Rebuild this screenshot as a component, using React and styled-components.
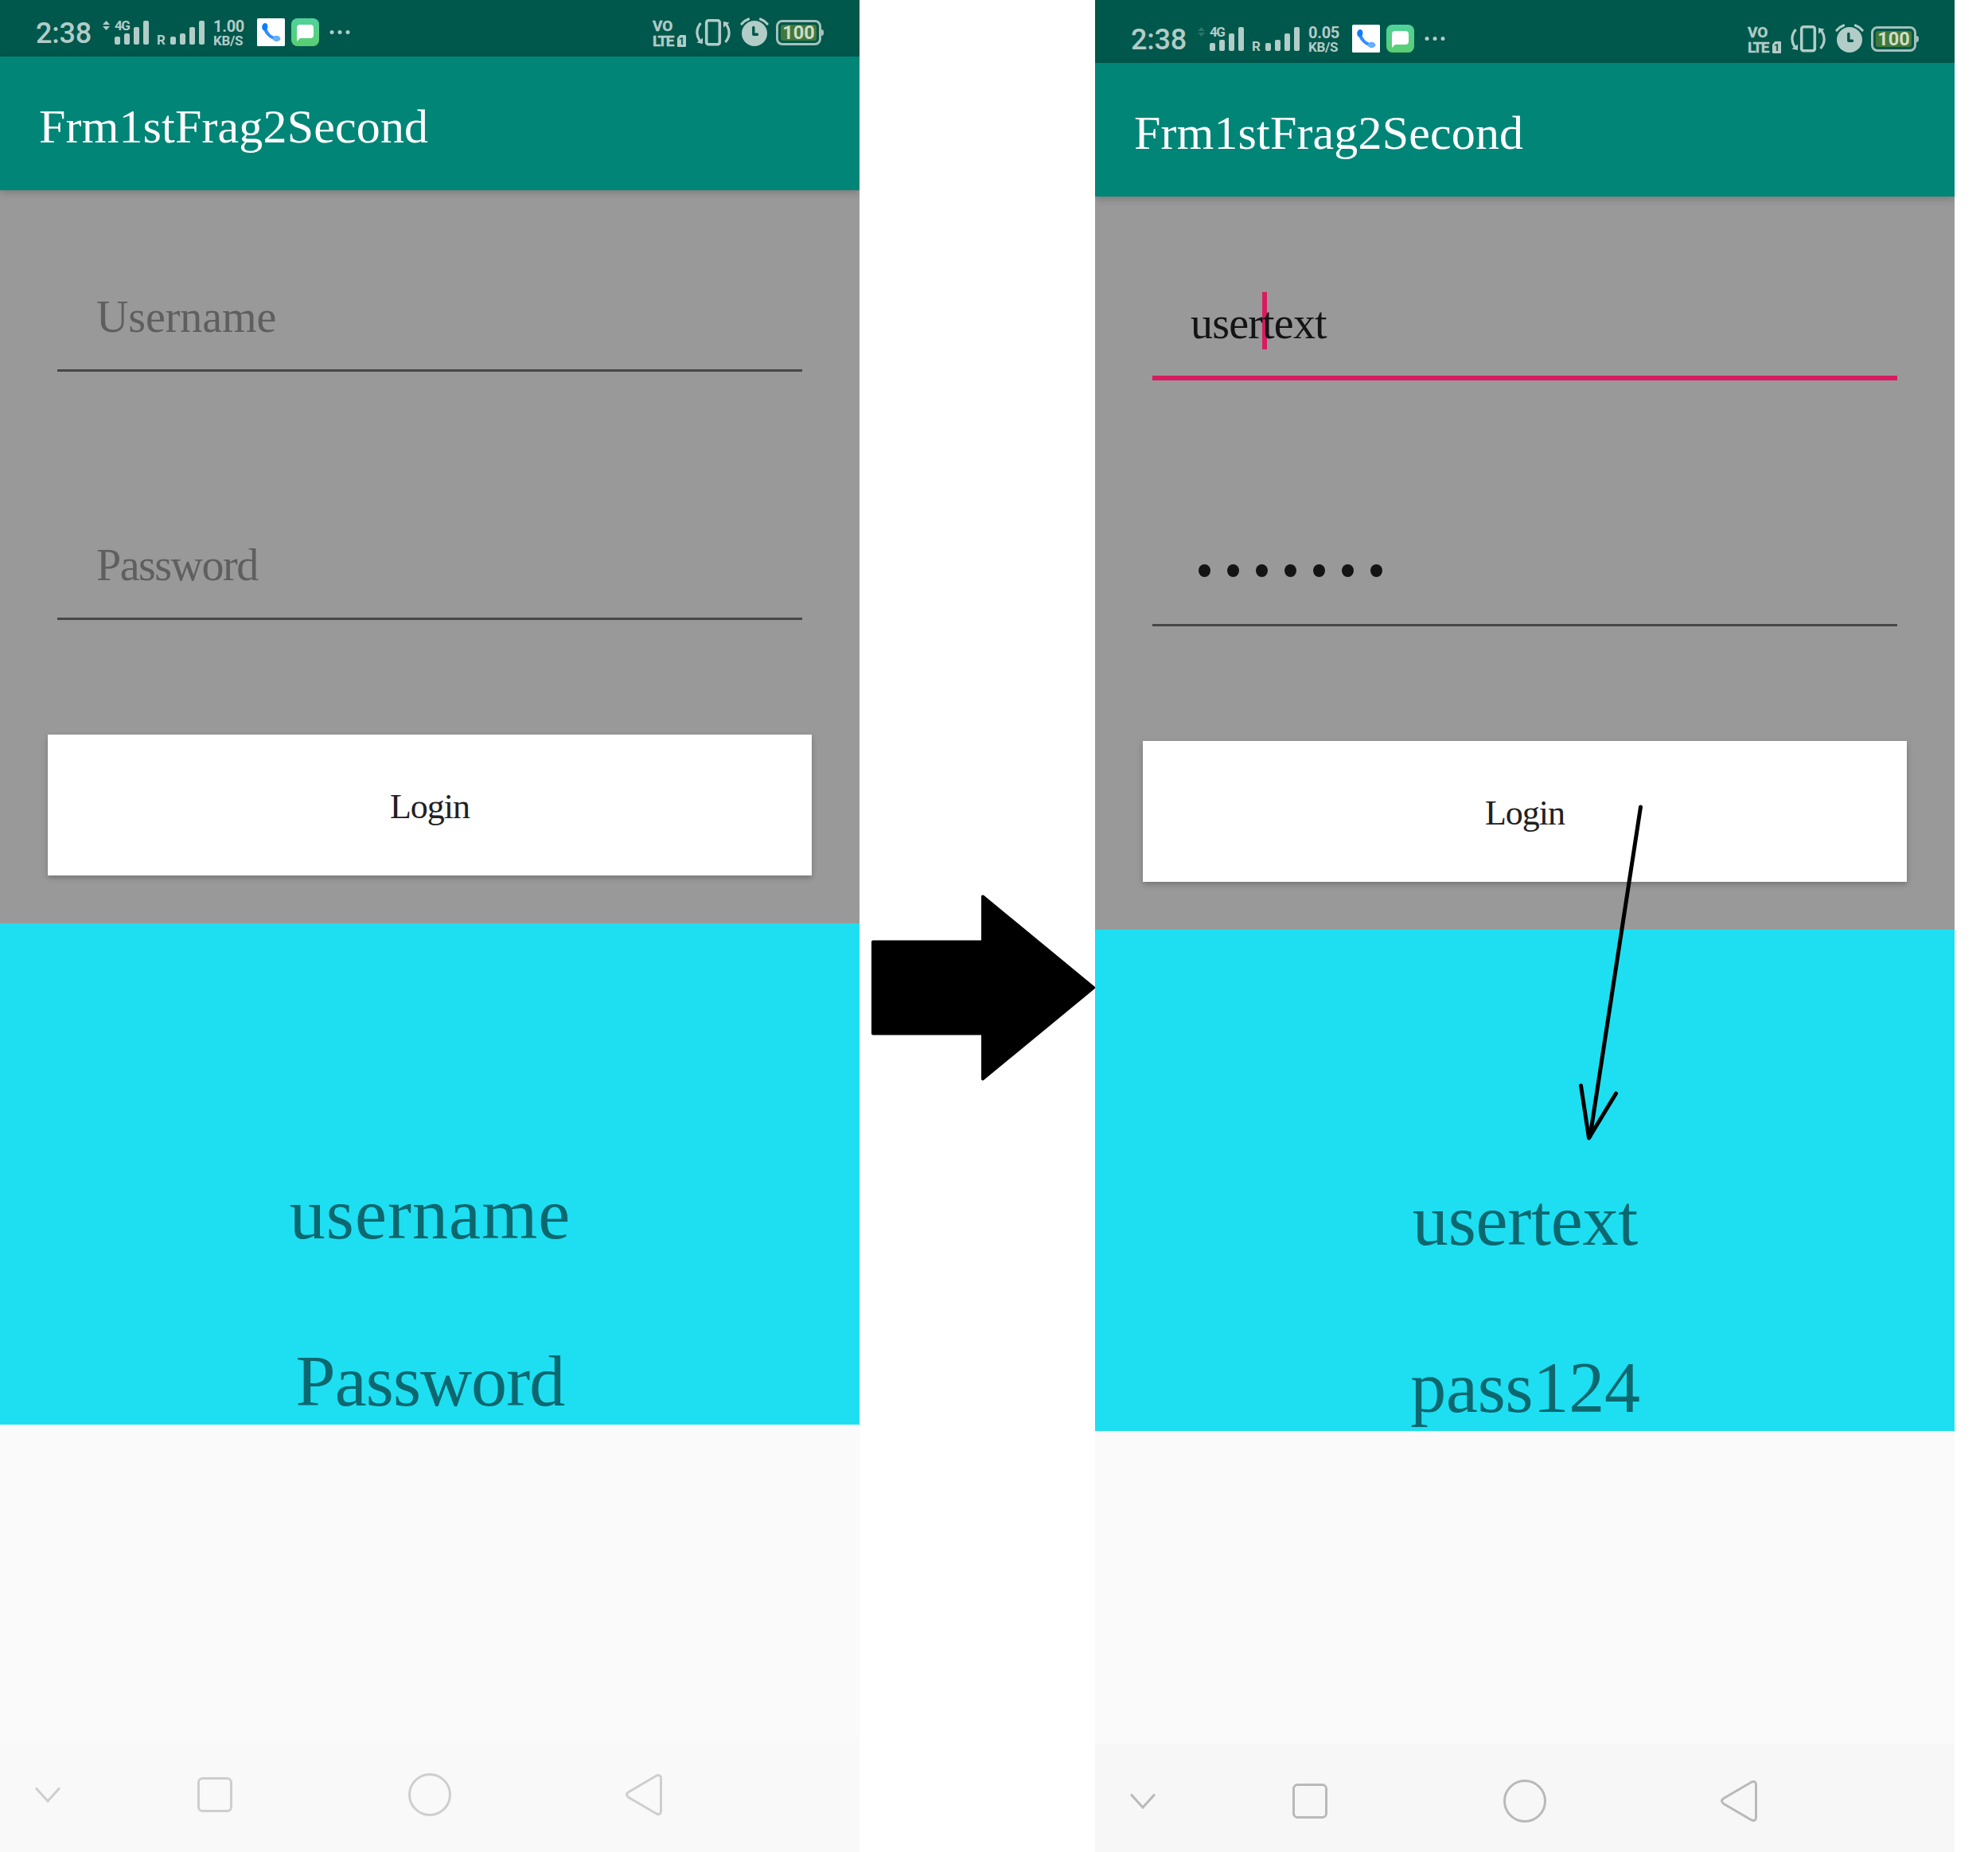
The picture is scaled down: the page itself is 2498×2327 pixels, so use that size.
import React from "react";
import styled, { createGlobalStyle } from "styled-components";

const ICON = "#b2ccc8";
const STATUS_BG = "#00574b";

const GlobalStyle = createGlobalStyle`
  * { box-sizing: border-box; }
  html, body { margin: 0; padding: 0; background: #fff; }
  body { width: 2498px; height: 2327px; overflow: hidden; }
`;

const Board = styled.main`
  position: relative;
  display: grid;
  grid-template-columns: 1080px 296px 1080px;
  width: 2498px;
  height: 2327px;
  background: #fff;
  overflow: hidden;
`;

const Phone = styled.section`
  display: flex;
  flex-direction: column;
  height: 2327px;
  background: #fafafa;
  overflow: hidden;
`;

const StatusBar = styled.header`
  display: flex;
  justify-content: space-between;
  align-items: flex-end;
  flex: none;
  height: ${(p) => p.$height}px;
  padding: 0 45px 13px 45px;
  background: ${STATUS_BG};
  color: ${ICON};
  font-family: Roboto, "Liberation Sans", sans-serif;
  font-weight: 500;
`;

const StatusSide = styled.div`
  display: flex;
  align-items: flex-start;
  height: 36px;
`;

const Clock = styled.span`
  width: 84px;
  font-size: 36px;
  line-height: 36px;
  padding-top: 2px;
  letter-spacing: -0.2px;
`;

const TrafficArrows = styled.svg`
  flex: none;
  width: 9px;
  height: 12px;
  margin-top: 4px;
  opacity: ${(p) => (p.$dim ? 0.25 : 1)};
`;

const Signal = styled.div`
  position: relative;
  display: flex;
  align-items: flex-end;
  gap: 5px;
  height: 34px;
  margin-left: ${(p) => p.$gap}px;
`;

const SignalBar = styled.i`
  width: 7px;
  height: ${(p) => p.$h}px;
  border-radius: 2px;
  background: ${ICON};
`;

const NetworkLabel = styled.span`
  position: absolute;
  left: 0;
  top: 2px;
  font-size: 17px;
  font-weight: 700;
  line-height: 16px;
  letter-spacing: -1.6px;
`;

const Roaming = styled.span`
  width: 10px;
  margin: 20px 0 0 10px;
  font-size: 17px;
  font-weight: 700;
  line-height: 16px;
`;

const Speed = styled.div`
  width: 42px;
  margin: 2px 0 0 11px;
  font-weight: 700;
`;

const SpeedValue = styled.div`
  font-size: 20px;
  line-height: 18px;
  letter-spacing: -0.3px;
`;

const SpeedUnit = styled.div`
  font-size: 17px;
  line-height: 18px;
  letter-spacing: -0.3px;
`;

const AppIcon = styled.svg`
  flex: none;
  width: 35px;
  height: 35px;
  margin: 1px 0 0 ${(p) => p.$gap}px;
`;

const More = styled.svg`
  width: 28px;
  height: 8px;
  margin: 15px 0 0 11px;
`;

const Volte = styled.div`
  width: 43px;
  margin-right: 11px;
  padding-top: 1px;
  font-weight: 700;
  font-size: 19px;
  line-height: 19px;
  -webkit-text-stroke: 0.4px ${ICON};
`;

const VolteRow = styled.div`
  display: flex;
  align-items: flex-start;
  height: 19px;
`;

const Lte = styled.span`
  flex: none;
  width: 28px;
  letter-spacing: -1.6px;
`;

const SimBadge = styled.span`
  flex: none;
  width: 11px;
  height: 15px;
  margin: 2px 0 0 3px;
  border-radius: 1px;
  clip-path: polygon(30% 0, 100% 0, 100% 100%, 0 100%, 0 26%);
  background: ${ICON};
  color: ${STATUS_BG};
  -webkit-text-stroke: 0;
  font-size: 13px;
  line-height: 15px;
  text-align: center;
  letter-spacing: 0;
`;

const StatusIcon = styled.svg`
  flex: none;
  width: ${(p) => p.$w}px;
  height: 36px;
  margin-right: ${(p) => p.$gap}px;
`;

const Battery = styled.div`
  position: relative;
  width: 57px;
  height: 32px;
  margin: 3px 3px 0 0;
  padding: 3px;
  border: 3px solid #a3c1bc;
  border-radius: 8px;
  &::after {
    content: "";
    position: absolute;
    left: 54px;
    top: 9px;
    width: 3px;
    height: 8px;
    border-radius: 0 4px 4px 0;
    background: #a3c1bc;
  }
`;

const BatteryLevel = styled.div`
  height: 20px;
  border-radius: 3px;
  background: #41793a;
  color: #cfddc9;
  font-size: 23.5px;
  line-height: 21px;
  font-weight: 700;
  text-align: center;
`;

const serif = `font-family: "Liberation Serif", "Times New Roman", serif;`;

const AppBar = styled.div`
  position: relative;
  z-index: 1;
  flex: none;
  height: 168px;
  padding: 58px 0 0 49px;
  background: #008577;
  box-shadow: 0 3px 9px rgba(0, 0, 0, 0.2);
  color: #fff;
  ${serif}
  font-size: 60px;
  line-height: 60px;
  letter-spacing: 0.15px;
`;

const Form = styled.div`
  flex: none;
  display: flex;
  flex-direction: column;
  height: 921px;
  padding: 130px 60px 60px;
  background: #999;
`;

const Field = styled.label`
  position: relative;
  display: flex;
  flex-direction: column;
  justify-content: space-between;
  height: 98px;
  margin: 0 12px ${(p) => p.$after}px;
`;

const FieldText = styled.span`
  position: relative;
  height: 56px;
  padding: 1px 0 0 ${(p) => (p.$hint ? 49 : 48)}px;
  color: ${(p) => (p.$hint ? "#5f5f5f" : "#141414")};
  ${serif}
  font-size: 56px;
  line-height: 56px;
  letter-spacing: ${(p) => p.$spacing}px;
`;

const Underline = styled.span`
  height: ${(p) => (p.$focused ? 6 : 3)}px;
  margin-bottom: ${(p) => (p.$focused ? -3 : 0)}px;
  background: ${(p) => (p.$focused ? "#d81b60" : "#474747")};
`;

const Caret = styled.span`
  position: absolute;
  left: 138px;
  top: -10px;
  width: 6px;
  height: 72px;
  background: #d81b60;
`;

const Mask = styled.span`
  display: flex;
  gap: 21px;
  padding: 20px 0 0 58px;
`;

const MaskDot = styled.i`
  width: 15px;
  height: 16px;
  border-radius: 50%;
  background: #141414;
`;

const LoginButton = styled.button`
  height: 177px;
  padding: 69px 0 0;
  border: 0;
  background: #fff;
  box-shadow: 0 3px 7px rgba(0, 0, 0, 0.24);
  color: #212121;
  ${serif}
  font-size: 44px;
  line-height: 44px;
  letter-spacing: -1px;
  display: block;
  text-align: center;
`;

const LoginLabel = styled.span`
  display: block;
  height: 108px;
`;

const Result = styled.div`
  flex: none;
  display: flex;
  flex-direction: column;
  align-items: center;
  gap: 120px;
  height: 630px;
  padding: 321px 0 0 1px;
  background: #1ddff1;
`;

const ResultText = styled.div`
  color: #0d676f;
  ${serif}
  font-size: 90px;
  line-height: 90px;
  letter-spacing: ${(p) => p.$spacing}px;
`;

const Blank = styled.div`
  flex: none;
  height: 393px;
`;

const NavBar = styled.nav`
  flex: none;
  height: 144px;
  background: ${(p) => (p.$strong ? "#f7f7f7" : "#f9f9f9")};
  color: ${(p) => (p.$strong ? "#b9b9b9" : "#cecece")};
`;

const NavIcons = styled.div`
  display: flex;
  align-items: center;
  height: 144px;
  padding-left: 43px;
`;

const NavIcon = styled.svg`
  flex: none;
  width: ${(p) => p.$w}px;
  height: 56px;
  margin-right: ${(p) => p.$gap}px;
  fill: none;
  stroke: currentColor;
  stroke-width: 3;
`;

const Gutter = styled.div`
  padding-top: 1124px;
`;

const BlockArrow = styled.svg`
  display: block;
  width: 281px;
  height: 234px;
  margin-left: 15px;
`;

const Pointer = styled.svg`
  position: absolute;
  left: 1980px;
  top: 1005px;
  width: 90px;
  height: 435px;
  fill: none;
  stroke: #000;
  stroke-width: 5;
  stroke-linecap: round;
  stroke-linejoin: round;
`;

const Bars = () => [10, 14, 22, 30].map((h) => <SignalBar key={h} $h={h} />);

function Status({ height, speed, idle }) {
  return (
    <StatusBar $height={height}>
      <StatusSide>
        <Clock>2:38</Clock>
        <TrafficArrows viewBox="0 0 9 12" $dim={idle}>
          <path d="M4.5 0L9 5H0zM0 7H9L4.5 12z" fill={ICON} />
        </TrafficArrows>
        <Signal $gap={6}>
          <NetworkLabel>4G</NetworkLabel>
          <Bars />
        </Signal>
        <Roaming>R</Roaming>
        <Signal $gap={7}>
          <Bars />
        </Signal>
        <Speed>
          <SpeedValue>{speed}</SpeedValue>
          <SpeedUnit>KB/S</SpeedUnit>
        </Speed>
        <AppIcon viewBox="0 0 35 35" $gap={13}>
          <rect width="35" height="35" rx="1.5" fill="#fff" />
          <path d="M9.5 10C10 17 16 24.5 24.5 25.5" fill="none" stroke="#2f8dff" strokeWidth="4" />
          <ellipse cx="9.8" cy="10.8" rx="3.6" ry="4.8" fill="#0d7dfa" transform="rotate(8 9.8 10.8)" />
          <ellipse cx="24.5" cy="25.5" rx="4.9" ry="3.7" fill="#66adff" />
        </AppIcon>
        <AppIcon viewBox="0 0 35 35" $gap={8}>
          <defs>
            <linearGradient id="message" x1="0" y1="0" x2="0" y2="1">
              <stop offset="0" stopColor="#50d29b" />
              <stop offset="1" stopColor="#5ace70" />
            </linearGradient>
          </defs>
          <rect width="35" height="35" rx="7.5" fill="url(#message)" />
          <path d="M11 8H24Q28 8 28 12V21Q28 25 24 25H11L7 29V12Q7 8 11 8Z" fill="#fff" />
        </AppIcon>
        <More viewBox="0 0 28 8">
          <circle cx="5" cy="3.5" r="2.5" fill={ICON} />
          <circle cx="15" cy="3.5" r="2.5" fill={ICON} />
          <circle cx="25" cy="3.5" r="2.5" fill={ICON} />
        </More>
      </StatusSide>
      <StatusSide>
        <Volte>
          <div>VO</div>
          <VolteRow>
            <Lte>LTE</Lte>
            <SimBadge>1</SimBadge>
          </VolteRow>
        </Volte>
        <StatusIcon viewBox="0 0 44 36" $w={44} $gap={12}>
          <rect x="13.7" y="3.7" width="16.6" height="30" rx="2.5" fill="none" stroke={ICON} strokeWidth="3.6" />
          <path d="M6.5 7C.8 14 .8 22 5 29M37.5 31C43.2 24 43.2 16 39 9" fill="none" stroke={ICON} strokeWidth="3.2" />
          <path d="M1.5 31.5L9 33V25.5zM42.5 6.5L35 5V12.5z" fill={ICON} />
        </StatusIcon>
        <StatusIcon viewBox="0 0 36 36" $w={36} $gap={9}>
          <circle cx="18" cy="20" r="16" fill={ICON} />
          <path d="M2 8Q6 3.5 10.5 2M25.5 2Q30 3.5 34 8" fill="none" stroke={ICON} strokeWidth="3.2" strokeLinecap="round" />
          <path d="M16.8 12.5V21.3H21.5" fill="none" stroke={STATUS_BG} strokeWidth="3.4" strokeLinecap="round" strokeLinejoin="round" />
        </StatusIcon>
        <Battery>
          <BatteryLevel>100</BatteryLevel>
        </Battery>
      </StatusSide>
    </StatusBar>
  );
}

function Navigation({ strong }) {
  return (
    <NavBar $strong={strong}>
      <NavIcons>
        <NavIcon viewBox="0 0 34 56" $w={34} $gap={169}>
          <path d="M2 19.5L17 36L32 19.5" />
        </NavIcon>
        <NavIcon viewBox="0 0 48 56" $w={48} $gap={218}>
          <rect x="3.5" y="7.5" width="41" height="41" rx="5" />
        </NavIcon>
        <NavIcon viewBox="0 0 56 56" $w={56} $gap={217}>
          <circle cx="28" cy="28" r="25.5" />
        </NavIcon>
        <NavIcon viewBox="0 0 50 56" $w={50} $gap={0}>
          <path d="M5 24.5L40 4Q45.5 2 45.5 8V48Q45.5 54 40 52L5 31.5Q0 28 5 24.5Z" />
        </NavIcon>
      </NavIcons>
    </NavBar>
  );
}

function Screen({ statusHeight, speed, idle, user, masked, results, strong }) {
  return (
    <Phone>
      <Status height={statusHeight} speed={speed} idle={idle} />
      <AppBar>Frm1stFrag2Second</AppBar>
      <Form>
        <Field $after={214}>
          {user && <Caret />}
          <FieldText $hint={!user} $spacing={user ? -0.8 : -0.1}>
            {user || "Username"}
          </FieldText>
          <Underline $focused={Boolean(user)} />
        </Field>
        <Field $after={144}>
          {masked ? (
            <Mask>
              {Array.from({ length: masked }, (_, i) => (
                <MaskDot key={i} />
              ))}
            </Mask>
          ) : (
            <FieldText $hint $spacing={-1.5}>
              Password
            </FieldText>
          )}
          <Underline />
        </Field>
        <LoginButton type="button">
          <LoginLabel>Login</LoginLabel>
        </LoginButton>
      </Form>
      <Result>
        {results.map((r) => (
          <ResultText key={r.text} $spacing={r.spacing}>
            {r.text}
          </ResultText>
        ))}
      </Result>
      <Blank />
      <Navigation strong={strong} />
    </Phone>
  );
}

export default function App() {
  return (
    <>
      <GlobalStyle />
      <Board>
        <Screen
          statusHeight={71}
          speed="1.00"
          results={[
            { text: "username", spacing: 1.1 },
            { text: "Password", spacing: -0.9 },
          ]}
        />
        <Gutter>
          <BlockArrow viewBox="0 0 281 234">
            <path
              d="M2 59H140V2L279 116.5L140 231V174H2Z"
              transform="translate(0 .5)"
              stroke="#000"
              strokeWidth="4"
              strokeLinejoin="round"
            />
          </BlockArrow>
        </Gutter>
        <Screen
          statusHeight={79}
          speed="0.05"
          idle
          strong
          user="usertext"
          masked={7}
          results={[
            { text: "usertext", spacing: -0.2 },
            { text: "pass124", spacing: -0.2 },
          ]}
        />
        <Pointer viewBox="1980 1005 90 435">
          <path d="M2061.5 1014L1998 1428M1986.5 1364L1996.5 1430L2030.5 1374" />
        </Pointer>
      </Board>
    </>
  );
}
